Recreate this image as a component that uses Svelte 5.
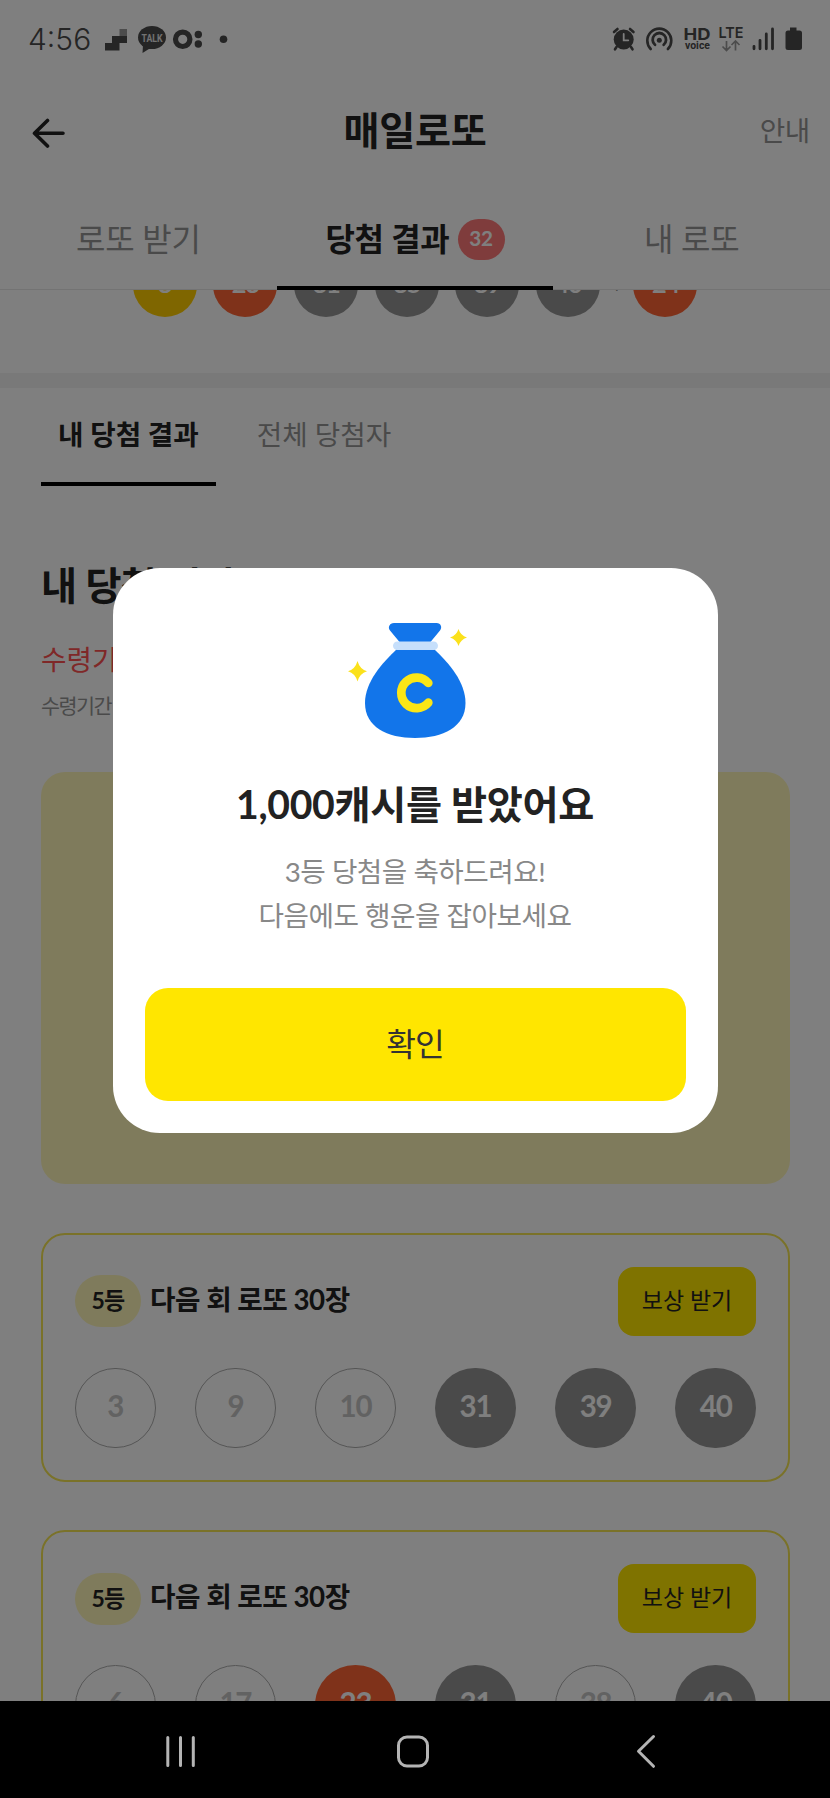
<script lang="ts">
	type Tone = 'yellow' | 'orange' | 'gray' | 'none';

	interface Ball {
		n: number;
		tone: Tone;
	}

	interface Ticket {
		rank: string;
		reward: string;
		balls: Ball[];
	}

	const winning: Ball[] = [
		{ n: 8, tone: 'yellow' },
		{ n: 23, tone: 'orange' },
		{ n: 31, tone: 'gray' },
		{ n: 35, tone: 'gray' },
		{ n: 39, tone: 'gray' },
		{ n: 40, tone: 'gray' }
	];
	const bonus: Ball = { n: 24, tone: 'orange' };

	const tickets: Ticket[] = [
		{
			rank: '5등',
			reward: '다음 회 로또 30장',
			balls: [
				{ n: 3, tone: 'none' },
				{ n: 9, tone: 'none' },
				{ n: 10, tone: 'none' },
				{ n: 31, tone: 'gray' },
				{ n: 39, tone: 'gray' },
				{ n: 40, tone: 'gray' }
			]
		},
		{
			rank: '5등',
			reward: '다음 회 로또 30장',
			balls: [
				{ n: 6, tone: 'none' },
				{ n: 17, tone: 'none' },
				{ n: 23, tone: 'orange' },
				{ n: 31, tone: 'gray' },
				{ n: 38, tone: 'none' },
				{ n: 40, tone: 'gray' }
			]
		}
	];

	const tabs = [
		{ label: '로또 받기', count: 0 },
		{ label: '당첨 결과', count: 32 },
		{ label: '내 로또', count: 0 }
	];
	const subTabs = ['내 당첨 결과', '전체 당첨자'];

	let tab = $state(1);
	let subTab = $state(0);
	let open = $state(true);
</script>

<div class="phone">
	<div class="screen">
		<div class="statusbar">
			<span class="clock">4:56</span>
			<svg class="notices" width="130" height="32" viewBox="100 24 130 32">
				<path d="M105 43h7v-7h15v7h-7.500v7.500H105z" fill="#4a4a4a" />
				<path d="M119.500 29h7.500v7h-7.500z" fill="#999" />
				<ellipse cx="152" cy="37.500" rx="14" ry="11.500" fill="#4a4a4a" />
				<path d="M143 45l-.5 8 8-5z" fill="#4a4a4a" />
				<text x="141.500" y="41.500" class="talk" textLength="21" lengthAdjust="spacingAndGlyphs">TALK</text>
				<circle cx="182.700" cy="39.300" r="7.200" fill="none" stroke="#4a4a4a" stroke-width="5.200" />
				<circle cx="198.300" cy="34.500" r="3.700" fill="#4a4a4a" />
				<circle cx="198.300" cy="44" r="3.700" fill="#4a4a4a" />
				<circle cx="223.500" cy="39.300" r="3.800" fill="#4a4a4a" />
			</svg>
			<svg class="signals" width="195" height="32" viewBox="610 24 195 32">
				<g fill="none" stroke="#4a4a4a" stroke-linecap="round">
					<circle cx="623.700" cy="39.500" r="10" fill="#4a4a4a" stroke="none" />
					<path d="M614 32l3.500-3M633.500 32l-3.500-3M616.500 47l-1.500 2.300M631 47l1.500 2.300" stroke-width="2.600" />
					<path d="M623.700 34v6.300h4.600" stroke="#fff" stroke-width="1.800" />
					<path d="M650.700 49a12 12 0 1 1 17.200 0" stroke-width="2.600" />
					<path d="M655 44.800a6.700 6.700 0 1 1 8.700 0" stroke-width="2.800" />
					<circle cx="659.300" cy="40.300" r="2.500" fill="#4a4a4a" stroke="none" />
					<path d="M754 46.300v2.500M760 40.300v8.500M766.300 34v14.800M772.500 29v19.800" stroke-width="2.800" />
				</g>
				<text x="683.500" y="40.300" class="hd" textLength="27" lengthAdjust="spacingAndGlyphs">HD</text>
				<text x="685" y="49" class="voice" textLength="25" lengthAdjust="spacingAndGlyphs">voice</text>
				<text x="718.500" y="38.300" class="lte" textLength="25" lengthAdjust="spacingAndGlyphs">LTE</text>
				<path
					d="M726.500 41v9.500M722.500 46.500l4 4 4-4M735.500 50.500V41M731.500 45l4-4 4 4"
					fill="none"
					stroke="#999"
					stroke-width="1.700"
				/>
				<path
					d="M790 27.500h6.500v3h3a2.500 2.500 0 0 1 2.500 2.500v14.500a2.500 2.500 0 0 1-2.500 2.500h-11.500a2.500 2.500 0 0 1-2.500-2.500V33a2.500 2.500 0 0 1 2.500-2.500h2z"
					fill="#4a4a4a"
				/>
			</svg>
		</div>

		<header class="header">
			<button type="button" class="back" aria-label="뒤로">
				<svg width="34" height="30" viewBox="0 0 34 30">
					<path
						d="M15.500 2.500L2.500 15.200l13 12.800M3 15.200h28"
						fill="none"
						stroke="#222"
						stroke-width="3.600"
						stroke-linecap="round"
						stroke-linejoin="round"
					/>
				</svg>
			</button>
			<h1>매일로또</h1>
			<button type="button" class="guide">안내</button>
		</header>

		<nav class="tabs">
			{#each tabs as item, i}
				<button type="button" class="tab" class:active={tab === i} onclick={() => (tab = i)}>
					{item.label}
					{#if item.count}<span class="count">{item.count}</span>{/if}
				</button>
			{/each}
		</nav>

		<main class="content">
			<div class="winning">
				{#each winning as ball}
					<span class="ball small {ball.tone}">{ball.n}</span>
				{/each}
				<span class="plus">+</span>
				<span class="ball small {bonus.tone}">{bonus.n}</span>
			</div>

			<div class="subtabs">
				{#each subTabs as label, i}
					<button
						type="button"
						class="subtab"
						class:active={subTab === i}
						onclick={() => (subTab = i)}>{label}</button
					>
				{/each}
			</div>

			<section class="results">
				<h2>내 당첨 결과</h2>
				<p class="warning">수령기간</p>
				<p class="note">수령기간</p>
				<div class="banner"></div>

				{#each tickets as ticket}
					<article class="ticket">
						<div class="ticket-head">
							<span class="rank">{ticket.rank}</span>
							<span class="reward">{ticket.reward}</span>
							<button type="button" class="claim">보상 받기</button>
						</div>
						<div class="balls">
							{#each ticket.balls as ball}
								<span class="ball {ball.tone}">{ball.n}</span>
							{/each}
						</div>
					</article>
				{/each}
			</section>
		</main>

		{#if open}
			<div class="overlay">
				<div class="modal" role="dialog" aria-modal="true">
					<svg class="bag" width="124" height="120" viewBox="0 0 124 120">
						<path
							d="M48 3h42.500c4.500 0 6 4.500 3.500 7.500L84.500 22h-31L44 10.500C41.500 7.500 43.500 3 48 3z"
							fill="#1275ea"
						/>
						<path
							d="M51 29h37c15 14 31.500 33 31.500 54 0 24-22.500 35-50.500 35s-50-11-50-35c0-21 17-40 32-54z"
							fill="#1275ea"
						/>
						<rect x="47" y="21.500" width="45" height="8.500" rx="4.250" fill="#c6dffb" />
						<path
							d="M82.300 63a15.300 15.300 0 1 0 0 19.700"
							fill="none"
							stroke="#fbe616"
							stroke-width="8.700"
							stroke-linecap="round"
						/>
						<path
							d="M112.500 9q2 6.500 8.500 8.500-6.500 2-8.500 8.500-2-6.500-8.500-8.500 6.500-2 8.500-8.500z"
							fill="#fbe11b"
						/>
						<path
							d="M11.500 41q2.200 8 9.500 10.300-7.300 2.200-9.500 10.200-2.200-8-9.500-10.200Q9.300 49 11.500 41z"
							fill="#fbe11b"
						/>
					</svg>
					<h3>1,000캐시를 받았어요</h3>
					<p>3등 당첨을 축하드려요!<br />다음에도 행운을 잡아보세요</p>
					<button type="button" class="confirm" onclick={() => (open = false)}>확인</button>
				</div>
			</div>
		{/if}
	</div>

	<div class="navbar">
		<svg width="830" height="97" viewBox="0 0 830 97">
			<g fill="none" stroke="#b4b4b4" stroke-width="3" stroke-linecap="round" stroke-linejoin="round">
				<path d="M167.800 36.500v28M180.500 36.500v28M193.300 36.500v28" />
				<rect x="398.500" y="36" width="29" height="29" rx="8.500" />
				<path d="M653.500 35.500L638.500 50.300l15 15" />
			</g>
		</svg>
	</div>
</div>

<style>
	:global(body) {
		margin: 0;
	}

	.phone {
		width: 830px;
		height: 1798px;
		display: flex;
		flex-direction: column;
		overflow: hidden;
		background: #fff;
		color: #222;
		font-family: Lato, 'Noto Sans CJK KR', sans-serif;
	}

	.screen {
		position: relative;
		height: 1701px;
		display: flex;
		flex-direction: column;
		overflow: hidden;
	}

	button {
		padding: 0;
		border: 0;
		background: none;
		color: inherit;
		font: inherit;
		cursor: pointer;
	}

	h1,
	h2,
	h3,
	p {
		margin: 0;
	}

	.statusbar {
		flex: none;
		height: 80px;
		padding: 0 25px 0 28px;
		display: flex;
		align-items: center;
		box-sizing: border-box;
	}

	.clock {
		width: 72px;
		color: #4a4a4a;
		font-family: Inter, sans-serif;
		font-size: 30px;
		font-weight: 300;
		line-height: 38px;
		padding-bottom: 2px;
		letter-spacing: 0;
		white-space: nowrap;
	}

	.signals {
		margin-left: auto;
	}

	.talk {
		fill: #e4e4e4;
		font-family: Roboto, sans-serif;
		font-size: 10.5px;
		font-weight: 700;
	}

	.hd,
	.lte,
	.voice {
		fill: #4a4a4a;
		font-family: Inter, sans-serif;
		font-size: 16.5px;
		font-weight: 700;
	}

	.lte {
		font-size: 15px;
		font-weight: 600;
	}

	.voice {
		font-family: Roboto, sans-serif;
		font-size: 10.5px;
	}

	.header {
		flex: none;
		height: 105px;
		padding: 0 20px 0 32px;
		display: grid;
		grid-template-columns: 1fr auto 1fr;
		align-items: center;
	}

	.back {
		height: 30px;
		justify-self: start;
	}

	h1 {
		margin-right: 12px;
		padding-bottom: 5px;
		font-size: 39.2px;
		font-weight: 700;
		line-height: 56px;
		letter-spacing: -0.3px;
	}

	.guide {
		padding-bottom: 3px;
		justify-self: end;
		color: #949494;
		font-size: 27.7px;
		line-height: 40px;
		letter-spacing: -0.3px;
	}

	.tabs {
		flex: none;
		height: 105px;
		display: grid;
		grid-template-columns: repeat(3, 1fr);
		box-sizing: border-box;
		border-bottom: 1px solid #e6e6e6;
	}

	.tab {
		display: flex;
		align-items: center;
		justify-content: center;
		gap: 8px;
		margin-bottom: -1px;
		padding-top: 3px;
		border-bottom: 4px solid transparent;
		color: #949494;
		font-size: 32px;
		letter-spacing: -0.3px;
	}

	.tab.active {
		border-color: #000;
		color: #222;
		font-weight: 700;
	}

	.count {
		width: 47px;
		height: 41px;
		margin-top: 5px;
		border-radius: 21px;
		background: #ff7878;
		color: #fff;
		font-size: 20.7px;
		line-height: 38px;
		text-align: center;
	}

	.content {
		flex: 1;
		min-height: 0;
		overflow: hidden;
	}

	.winning {
		margin-top: -37.5px;
		padding-bottom: 56px;
		display: flex;
		align-items: center;
		justify-content: center;
		gap: 16.7px;
		border-bottom: 15px solid #f3f3f3;
	}

	.plus {
		width: 0;
		display: flex;
		justify-content: center;
		color: #949494;
		font-size: 20px;
	}

	.ball {
		width: 80.500px;
		height: 80.500px;
		box-sizing: border-box;
		border-radius: 50%;
		color: #fff;
		font-size: 29.500px;
		font-weight: 700;
		line-height: 75px;
		text-align: center;
		letter-spacing: -1.2px;
	}

	.ball.small {
		width: 64px;
		height: 64px;
		font-size: 25.4px;
		line-height: 60px;
	}

	.yellow {
		background: #ffcc00;
	}

	.orange {
		background: #ff6434;
	}

	.gray {
		background: #949494;
	}

	.none {
		border: 1px solid #aaa;
		color: #c4c4c4;
		line-height: 73px;
	}

	.subtabs {
		height: 98.500px;
		padding: 0 41px;
		display: flex;
		gap: 24px;
	}

	.subtab {
		padding: 0 17px 3px;
		border-bottom: 4px solid transparent;
		color: #949494;
		font-size: 27.7px;
	}

	.subtab.active {
		border-color: #000;
		color: #222;
		font-weight: 700;
	}

	.results {
		padding: 70px 40px 0 41px;
	}

	h2 {
		font-size: 39.2px;
		font-weight: 700;
		line-height: 58px;
		letter-spacing: -0.6px;
	}

	.warning {
		margin-top: 26px;
		color: #ff5050;
		font-size: 27.7px;
		line-height: 40px;
	}

	.note {
		margin-top: 11px;
		color: #949494;
		font-size: 20.7px;
		line-height: 30px;
		letter-spacing: -1.500px;
	}

	.banner {
		height: 412px;
		margin-top: 51px;
		border-radius: 24px;
		background: #fff6b9;
	}

	.ticket {
		height: 249px;
		margin-top: 48.500px;
		padding: 32px 32px;
		box-sizing: border-box;
		border: 2px solid #f4e452;
		border-radius: 24px;
	}

	.ticket-head {
		display: flex;
		align-items: center;
		height: 69px;
	}

	.rank {
		width: 66px;
		height: 52px;
		margin-right: 9px;
		border-radius: 26px;
		background: #fff6b9;
		font-size: 23px;
		font-weight: 700;
		line-height: 50px;
		text-align: center;
		letter-spacing: -0.7px;
	}

	.reward {
		padding-bottom: 7px;
		font-size: 27.7px;
		font-weight: 700;
		letter-spacing: -0.5px;
	}

	.claim {
		width: 138px;
		height: 69px;
		margin-left: auto;
		padding-bottom: 5px;
		border-radius: 16px;
		background: #ffe600;
		font-size: 23px;
	}

	.balls {
		margin-top: 32px;
		display: flex;
		justify-content: space-between;
	}

	.overlay {
		position: absolute;
		inset: 0;
		display: flex;
		align-items: center;
		justify-content: center;
		background: rgba(0, 0, 0, 0.5);
	}

	.modal {
		width: 605px;
		height: 565px;
		padding: 52px 32px 32px;
		display: flex;
		flex-direction: column;
		align-items: center;
		box-sizing: border-box;
		border-radius: 47px;
		background: #fff;
		text-align: center;
	}

	.bag {
		flex: none;
		margin-right: 14px;
	}

	h3 {
		margin-top: 36px;
		font-size: 39.2px;
		font-weight: 700;
		line-height: 56px;
		letter-spacing: -0.3px;
	}

	.modal p {
		margin-top: 18px;
		color: #888;
		font-size: 27.7px;
		line-height: 44px;
		letter-spacing: -0.5px;
	}

	.confirm {
		width: 100%;
		height: 113px;
		margin-top: auto;
		padding-bottom: 6px;
		border-radius: 23px;
		background: #ffe600;
		color: #333;
		font-size: 32.3px;
		letter-spacing: -1px;
	}

	.navbar {
		flex: none;
		height: 97px;
		background: #000;
	}
</style>
